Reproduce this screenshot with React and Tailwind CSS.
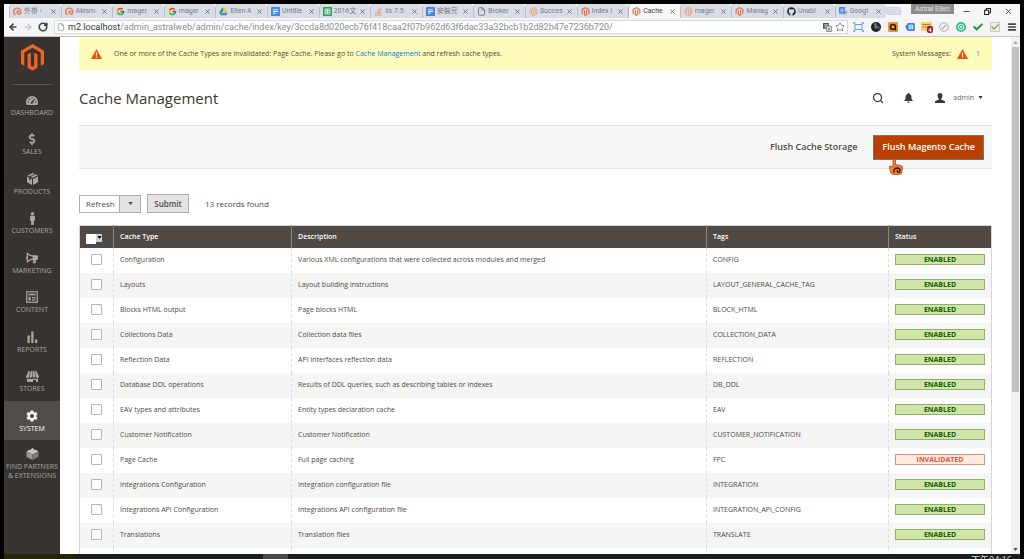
import React, { useState } from "react";
import { FaMagento, FaGithub, FaDollarSign, FaMale, FaBullhorn, FaStackOverflow, FaCheck } from "react-icons/fa";
import { FcGoogle } from "react-icons/fc";
import { MdSettings } from "react-icons/md";
import { ArrowLeft, ArrowRight, RotateCw, File, Star, Menu, X, Minus, Search } from "lucide-react";

/* ---------- Favicons ---------- */

const AstralIcon = () => (
    <svg viewBox="0 0 16 16" className="size-full" fill="none" stroke="#e07a5a" strokeWidth="2.6">
        <path d="M4.5 14A6.4 6.4 0 1 1 12 13M12 13c-3 .5-5-1.500-4.600-4.200C8 6.500 11 7 10.500 9.500" />
    </svg>
);
const GoogleIcon = () => <FcGoogle className="size-full" />;
const DriveIcon = () => (
    <svg viewBox="0 0 16 16" className="size-full">
        <path d="M5.500 1h5l5 9h-5z" fill="#f2c33c" />
        <path d="M5.500 1L8 5.500 3 14.500 .5 10z" fill="#2f9e63" />
        <path d="M5.500 10h10L13 14.500H3z" fill="#4a82e0" />
    </svg>
);
const DocIcon = () => (
    <svg viewBox="0 0 16 16" className="size-full">
        <rect width="16" height="16" rx="1.500" fill="#4a86e8" />
        <path d="M3.500 5h9M3.500 8h9M3.500 11h5" stroke="#fff" strokeWidth="1.600" />
    </svg>
);
const SheetIcon = () => (
    <svg viewBox="0 0 16 16" className="size-full">
        <rect width="16" height="16" rx="1.500" fill="#2f9e63" />
        <path d="M3.500 3.500h9v9h-9zM3.500 6.500h9M3.500 9.500h9M8 3.500v9" stroke="#fff" strokeWidth="1.200" fill="none" />
    </svg>
);
const PageIcon = () => <File className="size-full" color="#666" />;
const GlobeOrange = () => (
    <svg viewBox="0 0 16 16" className="size-full" fill="none" stroke="#eda27c" strokeWidth="1.800">
        <circle cx="8" cy="8" r="6.500" />
        <path d="M4.500 11V6.500L8 4.500l3.500 2V11M8 7v6" />
    </svg>
);
const TranslateIcon = () => (
    <svg viewBox="0 0 16 16" className="size-full">
        <rect x="6" y="5" width="10" height="11" rx="1" fill="#cfd6e2" />
        <rect width="10.500" height="12" rx="1" fill="#4a86e8" />
        <path d="M7.500 4.500A2.600 2.600 0 1 0 8 6.500H5.500" stroke="#fff" strokeWidth="1.200" fill="none" />
        <path d="M9 9h5M11.500 8v1M13 9c-.5 2-2 3.500-3.500 4" stroke="#667" fill="none" />
    </svg>
);
const MagentoOrange = () => <FaMagento className="size-full" color="#e8663a" />;
const StackIcon = () => <FaStackOverflow className="size-full" color="#d99a6c" />;
const GithubIcon = () => <FaGithub className="size-full" color="#222" />;

const TABS = [
    { title: "外掛 ‹", Icon: AstralIcon },
    { title: "Akism", Icon: AstralIcon },
    { title: "mager", Icon: GoogleIcon },
    { title: "mager", Icon: GoogleIcon },
    { title: "Ellen A", Icon: DriveIcon },
    { title: "Untitle", Icon: DocIcon },
    { title: "2016文", Icon: SheetIcon },
    { title: "iis 7.5", Icon: StackIcon },
    { title: "安裝完", Icon: DocIcon },
    { title: "Broker", Icon: PageIcon },
    { title: "Succes", Icon: GlobeOrange },
    { title: "Index I", Icon: MagentoOrange },
    { title: "Cache", Icon: MagentoOrange, active: true },
    { title: "mager", Icon: GlobeOrange },
    { title: "Manag", Icon: MagentoOrange },
    { title: "Unabl", Icon: GithubIcon },
    { title: "Googl", Icon: TranslateIcon },
];

/* ---------- Sidebar icons ---------- */

const GaugeIcon = () => (
    <svg viewBox="0 0 24 18" className="h-[9px] w-3" fill="currentColor">
        <path fillRule="evenodd" d="M12 0A12 12 0 0 0 0 12v3q0 3 3 3h18q3 0 3-3v-3A12 12 0 0 0 12 0zM3 11h3v2H3zM6 5l2 2-1.500 1.500-2-2zM11 2.500h2v3h-2zM18 11h3v2h-3zM17.500 5l1 1-5 7.500a2 2 0 1 1-2.500-2z" />
    </svg>
);
const BoxIcon = () => (
    <svg viewBox="0 0 22 24" className="h-3 w-[11px]" fill="currentColor">
        <path d="M11 0l4 1.800L5.500 6.300 1 4.800zM17 2.500l4.500 2.300L11 9.500 7.500 7.300zM0 7l4 1.800v4l3 1.500v-4L10 12v12L0 18.500zM22 7v11.500L12 24V12z" />
    </svg>
);
const ContentIcon = () => (
    <svg viewBox="0 0 24 24" className="size-3" fill="none" stroke="currentColor">
        <rect x="1.500" y="1.500" width="21" height="21" strokeWidth="2.500" />
        <path d="M5 7h14" strokeWidth="3.500" />
        <path d="M5 11.500h4.500V19H5z" fill="currentColor" stroke="none" />
        <path d="M12 13h7M12 17.500h7" strokeWidth="2.500" />
    </svg>
);
const ReportsIcon = () => (
    <svg viewBox="0 0 22 24" className="h-3 w-[11px]" fill="currentColor">
        <path d="M1 9h4.500v15H1zM8.500 1H13v23H8.500zM16 17h4.500v7H16z" />
    </svg>
);
const StoreIcon = () => (
    <svg viewBox="0 0 26 22" className="h-[11px] w-[13px]" fill="currentColor">
        <path d="M5 0h3L6 11a3 3 0 0 1-6 0zM9.500 0h3v11a2.800 2.800 0 0 1-5.500 0zM13.500 0h3L19 11a2.800 2.800 0 0 1-5.500 0zM18 0h3l5 11a3 3 0 0 1-6 0zM2 15q4 1.500 6 0 3 1.500 5 0 3 1.500 5 0 3 1.500 6 0v7h-4v-4h-6v4H2z" />
    </svg>
);
const PartnersIcon = () => (
    <svg viewBox="0 0 26 24" className="h-3 w-[13px]">
        <path d="M13 2l12 5-12 6L1 7z" fill="#bcb6b0" />
        <path d="M1 7l12 6v11L1 18z" fill="#9b958f" />
        <path d="M25 7l-12 6v11l12-6z" fill="#807a74" />
        <path d="M10 2q3-3 6 0v2q-3 2-6 0zM4 5q3-3 6 0v2q-3 2-6 0zM16 5q3-3 6 0v2q-3 2-6 0zM10 8q3-3 6 0v2q-3 2-6 0z" fill="#d2ccc6" />
    </svg>
);

const MENU = [
    { label: "Dashboard", icon: <GaugeIcon /> },
    { label: "Sales", icon: <FaDollarSign className="size-3" /> },
    { label: "Products", icon: <BoxIcon /> },
    { label: "Customers", icon: <FaMale className="size-[13px]" /> },
    { label: "Marketing", icon: <FaBullhorn className="size-3 -scale-x-100" /> },
    { label: "Content", icon: <ContentIcon /> },
    { label: "Reports", icon: <ReportsIcon /> },
    { label: "Stores", icon: <StoreIcon /> },
    { label: "System", icon: <MdSettings className="size-[14px]" />, active: true },
];

/* ---------- Data ---------- */

const CACHE_TYPES = [
    ["Configuration", "Various XML configurations that were collected across modules and merged", "CONFIG"],
    ["Layouts", "Layout building instructions", "LAYOUT_GENERAL_CACHE_TAG"],
    ["Blocks HTML output", "Page blocks HTML", "BLOCK_HTML"],
    ["Collections Data", "Collection data files", "COLLECTION_DATA"],
    ["Reflection Data", "API interfaces reflection data", "REFLECTION"],
    ["Database DDL operations", "Results of DDL queries, such as describing tables or indexes", "DB_DDL"],
    ["EAV types and attributes", "Entity types declaration cache", "EAV"],
    ["Customer Notification", "Customer Notification", "CUSTOMER_NOTIFICATION"],
    ["Page Cache", "Full page caching", "FPC", "INVALIDATED"],
    ["Integrations Configuration", "Integration configuration file", "INTEGRATION"],
    ["Integrations API Configuration", "Integrations API configuration file", "INTEGRATION_API_CONFIG"],
    ["Translations", "Translation files", "TRANSLATE"],
    ["Web Services Configuration", "REST and SOAP configurations, generated WSDL file", "WEBSERVICE"],
];

const WarningIcon = () => (
    <svg viewBox="0 0 22 20" className="h-[10px] w-[11px] shrink-0">
        <path d="M11 0l11 20H0z" fill="#eb5202" />
        <path d="M9.800 6.500h2.400v7H9.800zM9.800 15h2.400v2.400H9.800z" fill="#fff" />
    </svg>
);

const Caret = ({ className = "" }) => (
    <svg viewBox="0 0 10 7" className={`h-[3px] w-[5px] ${className}`} fill="currentColor">
        <path d="M0 0h10L5 7z" />
    </svg>
);

/* ---------- Browser chrome ---------- */

function TabStrip() {
    return (
        <div className="flex h-[14px] shrink-0 bg-[#f6f7f9] pl-[5px]">
            <div className="flex min-w-0 flex-1" role="tablist">
                {TABS.map(({ title, Icon, active }, i) => (
                    <div
                        key={i}
                        role="tab"
                        aria-selected={!!active}
                        className={`flex min-w-0 flex-1 items-center rounded-t-sm border-l pr-1 pl-[3px] ${active ? "border-[#aeb4be] bg-[#f7f7f7]" : "border-[#b9c0cb] bg-[#d9dde5]"}`}
                    >
                        <span className="size-[9px] shrink-0"><Icon /></span>
                        <span className={`ml-[2px] min-w-0 flex-1 overflow-hidden text-[7px] leading-3 whitespace-nowrap ${active ? "text-[#444]" : "text-[#777c86]"}`}>
                            {title}
                        </span>
                        <button type="button" aria-label="Close tab" className="shrink-0 text-[#666]">
                            <X className="size-[7px]" strokeWidth={3} />
                        </button>
                    </div>
                ))}
            </div>
            <div className="mt-[3px] h-2 w-[15px] skew-x-12 rounded-xs border border-[#cdd2da] bg-[#dadee6]" />
            <div className="ml-[10px] h-[10px] w-[43px] bg-[#8d8d8d] text-center text-[7px] leading-[10px] whitespace-nowrap text-[#e4e4e4]">Astral Ellen</div>
            <div className="ml-2 flex w-[58px] items-center justify-between pr-[7px] text-[#222]">
                <button type="button" aria-label="Minimize"><Minus className="size-[9px]" /></button>
                <button type="button" aria-label="Restore">
                    <svg viewBox="0 0 12 12" className="size-[7px]" fill="none" stroke="currentColor" strokeWidth="1.800">
                        <path d="M1 4h7v7H1zM4 4V1h7v7H8" />
                    </svg>
                </button>
                <button type="button" aria-label="Close"><X className="size-[9px]" /></button>
            </div>
        </div>
    );
}

function Extensions() {
    return (
        <div className="grid w-[170px] shrink-0 grid-cols-10 items-center justify-items-center">
            <svg viewBox="0 0 22 20" className="h-[10px] w-[11px]" fill="none" stroke="#6f9cc8" strokeWidth="2">
                <rect x="4" y="5" width="14" height="10" fill="#eaf2fa" />
                <path d="M0 2h5M0 18h5M17 2h5M17 18h5M2 0v4M20 0v4M2 16v4M20 16v4" />
            </svg>
            <svg viewBox="0 0 20 20" className="size-[10px]">
                <circle cx="10" cy="10" r="10" fill="#222" />
                <path d="M10 10L5 4a8 8 0 0 1 6-2z" fill="#5aa34a" />
                <path d="M10 10l7-3a8 8 0 0 1-2 9z" fill="#3a4e8c" />
                <circle cx="10" cy="10" r="3.500" fill="#777" />
            </svg>
            <svg viewBox="0 0 22 22" className="size-[10px]">
                <rect width="22" height="22" rx="3" fill="#ee9a2b" />
                <circle cx="11" cy="11" r="5.500" fill="none" stroke="#2c1a10" strokeWidth="3.500" />
                <path d="M13 14l5 4" stroke="#2c1a10" strokeWidth="3" />
            </svg>
            <svg viewBox="0 0 22 18" className="h-2 w-[10px]">
                <path d="M6 0h13q3 0 3 3v12q0 3-3 3H6L0 9z" fill="#3f87d9" />
                <rect x="8" y="4" width="10" height="10" fill="#dceaf8" />
                <path d="M10 7h6M10 11h6" stroke="#3f87d9" strokeWidth="1.500" />
            </svg>
            <span className="relative">
                <svg viewBox="0 0 22 20" className="h-[10px] w-[11px]">
                    <rect width="22" height="18" fill="#f3d27a" />
                    <path d="M3 5h16M3 10h12" stroke="#a9863a" strokeWidth="2" />
                </svg>
                <span className="absolute top-1 left-[6px] h-[7px] w-[6px] rounded-xs bg-[#b0152b] text-center text-[6px] leading-[7px] font-bold text-white">4</span>
            </span>
            <svg viewBox="0 0 20 20" className="size-[10px]" fill="none" stroke="#a9a9a9" strokeWidth="2">
                <circle cx="10" cy="10" r="8.500" />
                <path d="M6 14l8-8" strokeWidth="3" />
            </svg>
            <svg viewBox="0 0 20 20" className="size-[10px]">
                <circle cx="10" cy="10" r="10" fill="#2fc28a" />
                <circle cx="10" cy="10" r="5.500" fill="none" stroke="#fff" strokeWidth="1.800" />
                <circle cx="10" cy="10" r="2" fill="#fff" />
            </svg>
            <FaCheck className="size-[10px]" color="#1f9a3c" />
            <span className="flex size-[10px] items-center justify-center border border-[#c9c9c9] bg-[#eee]">
                <FaCheck className="size-2" color="#7bb84f" />
            </span>
            <button type="button" aria-label="Menu" className="text-[#444]"><Menu className="size-[10px]" strokeWidth={4} /></button>
        </div>
    );
}

function AddressBar() {
    return (
        <div className="flex h-[19px] shrink-0 items-center border-b border-[#c4c4c4] bg-[#f5f5f5] pl-1">
            <div className="flex w-[46px] shrink-0 items-center gap-[5px]">
                <button type="button" aria-label="Back" className="text-[#444]"><ArrowLeft className="size-[10px]" strokeWidth={4} /></button>
                <button type="button" aria-label="Forward" className="text-[#c4c4c4]"><ArrowRight className="size-[10px]" strokeWidth={3} /></button>
                <button type="button" aria-label="Reload" className="text-[#444]"><RotateCw className="size-[10px]" strokeWidth={4} /></button>
            </div>
            <div className="mr-[2px] flex h-[14px] min-w-0 flex-1 items-center border border-[#d8d8d8] bg-white px-[2px]">
                <File className="h-[10px] w-2 shrink-0" color="#888" />
                <span className="ml-[3px] min-w-0 flex-1 overflow-hidden text-[9px] leading-3 whitespace-nowrap text-[#8c8c8c]">
                    <span className="text-[#333]">m2.localhost</span>
                    /admin_astralweb/admin/cache/index/key/3ccda8d020ecb76f418caa2f07b962d63f6dac33a32bcb1b2d82b47e7236b720/
                </span>
                <svg viewBox="0 0 20 20" className="size-[9px] shrink-0">
                    <path d="M0 0h13v13H0z" fill="#555" />
                    <path d="M8 7h11v12H8z" fill="#eee" stroke="#666" strokeWidth="1.500" />
                    <path d="M2.500 4h8M6.500 2v2M9 4c-1 3-3 5-6 6M4 6l5 4" stroke="#fff" strokeWidth="1.300" fill="none" />
                    <path d="M11 17l2.500-7 2.500 7M12 15h3" stroke="#555" strokeWidth="1.300" fill="none" />
                </svg>
                <Star className="ml-[3px] size-[10px] shrink-0" color="#777" />
            </div>
            <Extensions />
        </div>
    );
}

/* ---------- Magento admin ---------- */

function Sidebar() {
    return (
        <nav className="flex w-14 shrink-0 flex-col items-center bg-[#373330] text-center text-[7px] leading-[9px] text-[#aaa6a0] uppercase">
            <a href="#home" aria-label="Magento" className="flex h-12 w-[39px] justify-center border-b border-[#5c5652] pt-[7px]">
                <svg viewBox="0 0 46 54" className="h-[27px] w-[23px]" fill="#f26322">
                    <path d="M23 0l23 13.300v26.500l-6.500 3.800V17L23 7.500 6.500 17v26.600L0 39.800V13.300z" />
                    <path d="M26.300 43.500L23 45.500l-3.300-2V17l-6.600 3.800v26.500L23 53.500l9.900-6.200V20.800L26.300 17z" />
                </svg>
            </a>
            <ul className="grid h-[355px] w-full auto-rows-fr">
                {MENU.map((m) => (
                    <li key={m.label} className={m.active ? "bg-[#524d49] text-white" : ""}>
                        <a href={`#${m.label.toLowerCase()}`} className="flex flex-col items-center pt-[7px]">
                            <span className="flex h-4 items-center">{m.icon}</span>
                            <span>{m.label}</span>
                        </a>
                    </li>
                ))}
            </ul>
            <a href="#partners" className="flex flex-col items-center pt-[6px]">
                <span className="flex h-4 items-center"><PartnersIcon /></span>
                <span>Find Partners<br />&amp; Extensions</span>
            </a>
        </nav>
    );
}

function SystemMessages() {
    return (
        <div className="flex h-[33px] items-center bg-[#fffbbb] px-3">
            <WarningIcon />
            <p className="ml-3 flex-1">
                One or more of the Cache Types are invalidated: Page Cache. Please go to{" "}
                <a href="#cache" className="text-[#007bdb]">Cache Management</a> and refresh cache types.
            </p>
            <span className="mr-[6px]">System Messages:</span>
            <WarningIcon />
            <a href="#messages" className="ml-2 text-[#5f87b8]">1</a>
        </div>
    );
}

function PageTitle() {
    return (
        <header className="flex h-[55px] items-center pr-[9px]">
            <h1 className="flex-1 text-[15px] leading-5 text-[#41362f]">Cache Management</h1>
            <button type="button" aria-label="Search" className="mr-5 text-[#41362f]"><Search className="size-3" strokeWidth={2.5} /></button>
            <button type="button" aria-label="Notifications" className="mr-[22px] text-[#41362f]">
                <svg viewBox="0 0 18 20" className="h-[10px] w-[9px]" fill="currentColor">
                    <path d="M9 0q2 0 2 2 4 1 4 6v4l3 4H0l3-4V8q0-5 4-6 0-2 2-2zM6.500 17.500h5Q11 20 9 20t-2.500-2.500z" />
                </svg>
            </button>
            <button type="button" className="flex items-center text-[#41362f]">
                <svg viewBox="0 0 20 20" className="size-[10px]" fill="currentColor">
                    <path d="M10 0q5 0 5 5 0 4-2.500 6v2.500Q20 15 20 18v2H0v-2q0-3 7.500-4.500V11Q5 9 5 5q0-5 5-5z" />
                </svg>
                <span className="mr-1 ml-2 text-[7px] text-[#666]">admin</span>
                <Caret />
            </button>
        </header>
    );
}

function StatusCell({ status }) {
    return status === "INVALIDATED" ? (
        <span className="block border border-[#e0907a] bg-[#ffe9df] text-center leading-[9px] font-bold text-[#e2543c]">{status}</span>
    ) : (
        <span className="block border border-[#8fb070] bg-[#cfe6a8] text-center leading-[9px] font-bold text-[#185b00]">{status}</span>
    );
}

function CacheGrid() {
    const [selected, setSelected] = useState([]);

    const toggle = (name) =>
        setSelected((s) => (s.includes(name) ? s.filter((n) => n !== name) : [...s, name]));
    const toggleAll = () =>
        setSelected((s) => (s.length ? [] : CACHE_TYPES.map(([name]) => name)));

    return (
        <table className="w-full table-fixed border-collapse border border-[#d6d6d6] text-left">
            <colgroup>
                <col className="w-[34px]" />
                <col className="w-[178px]" />
                <col />
                <col className="w-[182px]" />
                <col className="w-[103px]" />
            </colgroup>
            <thead>
                <tr className="h-[22px] bg-[#514943] text-white">
                    <th className="pl-[6px]">
                        <span className="mt-1 flex">
                            <input
                                type="checkbox"
                                aria-label="Select all"
                                checked={selected.length === CACHE_TYPES.length}
                                onChange={toggleAll}
                                className="size-[10px] appearance-none bg-white checked:bg-[#514943]"
                            />
                            <button type="button" aria-label="Selection options" className="flex h-2 w-[6px] items-center justify-center bg-[#d0d0d0] text-black">
                                <Caret />
                            </button>
                        </span>
                    </th>
                    {["Cache Type", "Description", "Tags", "Status"].map((h) => (
                        <th key={h} className="border-l border-[#8a837f] pl-[6px] font-semibold">{h}</th>
                    ))}
                </tr>
            </thead>
            <tbody>
                {CACHE_TYPES.map(([name, description, tags, status = "ENABLED"]) => (
                    <tr key={name} className="h-[25px] even:bg-[#f5f5f5]">
                        <td className="pb-px pl-[11px]">
                            <input
                                type="checkbox"
                                aria-label={name}
                                checked={selected.includes(name)}
                                onChange={() => toggle(name)}
                                className="block size-[11px] appearance-none rounded-[1px] border border-[#b5b5b5] bg-white checked:bg-[#514943]"
                            />
                        </td>
                        <td className="border-l border-dashed border-[#dedede] pb-px pl-[6px]">{name}</td>
                        <td className="border-l border-dashed border-[#dedede] pb-px pl-[6px]">{description}</td>
                        <td className="border-l border-dashed border-[#dedede] pb-px pl-[6px]">{tags}</td>
                        <td className="border-l border-dashed border-[#dedede] px-[6px] pb-px"><StatusCell status={status} /></td>
                    </tr>
                ))}
            </tbody>
        </table>
    );
}

function CachePage() {
    return (
        <main className="min-w-0 flex-1 overflow-hidden bg-white px-[19px] text-[7px] leading-[10px] text-[#514943]">
            <SystemMessages />
            <PageTitle />

            <div className="flex h-11 items-center justify-end border-y border-[#e3e3e3] bg-[#f8f8f8] pr-2 text-[9px] font-semibold">
                <button type="button" className="mr-4">Flush Cache Storage</button>
                <div className="relative">
                    <button type="button" className="h-[25px] border border-[#777] bg-[#ba4000] px-2 text-white">Flush Magento Cache</button>
                    {/* Puntero del ratón */}
                    <svg viewBox="0 0 28 34" className="pointer-events-none absolute top-[23px] left-4 h-[17px] w-[14px]">
                        <path d="M9 1q4-1 4 3v9l11 2q4 1 3 6l-2 9q-1 3-4 3H9q-4 0-6-5L1 20q-1-4 2-4l5 2V3z" fill="#ef7d2b" stroke="#a8481c" strokeWidth="1.500" />
                        <path d="M10 29q-1-9 7-9 6 1 5 6-2 4-5 2-1-3 1-3" fill="none" stroke="#3d1c10" strokeWidth="3" />
                    </svg>
                </div>
            </div>

            <div className="flex items-center pt-[25px] pb-3 text-[8px]">
                <div className="relative h-[18px] w-[62px]">
                    <select aria-label="Action" className="size-full appearance-none border border-[#adadad] bg-white pl-[6px] text-[8px] leading-3">
                        <option>Refresh</option>
                        <option>Enable</option>
                        <option>Disable</option>
                    </select>
                    <span className="pointer-events-none absolute inset-y-0 right-0 flex w-[22px] items-center justify-center border border-[#adadad] bg-[#e3e3e3]">
                        <Caret />
                    </span>
                </div>
                <button type="button" className="ml-[6px] h-[19px] w-[42px] border border-[#adadad] bg-[#e3e3e3] font-semibold">Submit</button>
                <span className="ml-4">13 records found</span>
            </div>

            <CacheGrid />
        </main>
    );
}

export default function App() {
    return (
        <div className="flex h-screen flex-col overflow-hidden bg-black px-1 pt-1 font-['Open_Sans','Noto_Sans_CJK_TC',sans-serif]">
            <div className="shrink-0 font-['Roboto','Noto_Sans_CJK_TC',sans-serif]">
                <TabStrip />
                <AddressBar />
            </div>
            <div className="flex min-h-0 flex-1 overflow-hidden">
                <Sidebar />
                <CachePage />
                {/* Barra de desplazamiento */}
                <div className="flex w-[9px] shrink-0 flex-col items-center bg-[#f1f1f1] text-[#505050]">
                    <div className="flex h-[10px] items-center text-[#a3a3a3]"><Caret className="rotate-180" /></div>
                    <div className="h-2/3 w-[7px] bg-[#c1c1c1]" />
                    <div className="flex-1" />
                    <div className="flex h-[10px] items-center"><Caret /></div>
                </div>
            </div>
            <footer className="flex h-[5px] shrink-0 overflow-hidden bg-[#1d1e20] text-[9px] leading-3 text-[#ddd]">
                <div className="w-[72px] bg-[#23280c]" />
                <div className="ml-[187px] w-[25px] bg-[#4a4a4a]" />
                <div className="ml-auto pr-2">下午04:16</div>
            </footer>
        </div>
    );
}
